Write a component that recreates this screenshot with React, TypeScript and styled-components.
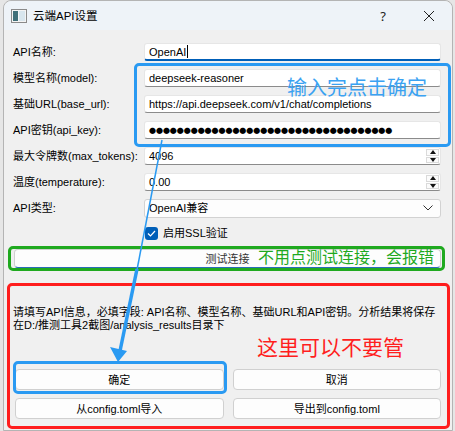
import React from 'react';
import styled, { createGlobalStyle } from 'styled-components';

const GlobalStyle = createGlobalStyle`
    body {
        margin: 0;
        background: #e6e6e6;
        font-family: "Liberation Sans", "Noto Sans CJK SC", sans-serif;
    }
`;

const ANNOT_BLUE = '#2a9af2';
const ANNOT_GREEN = '#1fa91f';
const ANNOT_RED = '#ff1e1e';

const fields = [
    { label: 'API名称:', value: 'OpenAI', focused: true },
    { label: '模型名称(model):', value: 'deepseek-reasoner' },
    { label: '基础URL(base_url):', value: 'https://api.deepseek.com/v1/chat/completions' },
];

export default function App() {
    return (
        <>
            <GlobalStyle />
            <Window>
                <TitleBar>
                    <AppIcon width="16" height="14" viewBox="0 0 16 14">
                        <rect x="0.5" y="0.5" width="15" height="13" fill="#f4f4f4" stroke="#8a8a8a" />
                        <rect x="2" y="2" width="5" height="10" fill="#3f6f78" />
                        <rect x="8" y="2" width="6" height="10" fill="#d8e6ee" />
                    </AppIcon>
                    <Title>云端API设置</Title>
                    <TitleButton>?</TitleButton>
                    <TitleButton>
                        <svg width="12" height="12" viewBox="0 0 12 12">
                            <path d="M1 1 L11 11 M11 1 L1 11" stroke="#222" strokeWidth="1" />
                        </svg>
                    </TitleButton>
                </TitleBar>
                <Body>
                    <Form>
                        {fields.map((f) => (
                            <React.Fragment key={f.label}>
                                <Label>{f.label}</Label>
                                <Input $focused={f.focused}>
                                    {f.value}
                                    {f.focused && <Caret />}
                                </Input>
                            </React.Fragment>
                        ))}
                        <Label>API密钥(api_key):</Label>
                        <Input>
                            <Dots>{'●'.repeat(35)}</Dots>
                        </Input>
                        <Label>最大令牌数(max_tokens):</Label>
                        <Input>
                            4096
                            <Spinner>
                                <SpinUp />
                                <SpinDown />
                            </Spinner>
                        </Input>
                        <Label>温度(temperature):</Label>
                        <Input>
                            0.00
                            <Spinner>
                                <SpinUp />
                                <SpinDown />
                            </Spinner>
                        </Input>
                        <Label>API类型:</Label>
                        <Combo>
                            OpenAI兼容
                            <Chevron width="10" height="6" viewBox="0 0 10 6">
                                <path d="M0.5 0.5 L5 5 L9.5 0.5" fill="none" stroke="#333" strokeWidth="1" />
                            </Chevron>
                        </Combo>
                        <span />
                        <CheckRow>
                            <CheckBox>
                                <svg width="9" height="7" viewBox="0 0 9 7">
                                    <path d="M1 3.5 L3.5 6 L8 1" fill="none" stroke="#fff" strokeWidth="1.2" />
                                </svg>
                            </CheckBox>
                            启用SSL验证
                        </CheckRow>
                    </Form>
                    <TestButton>测试连接</TestButton>
                    <Info>
                        请填写API信息，必填字段: API名称、模型名称、基础URL和API密钥。分析结果将保存
                        <br />
                        在D:/推测工具2截图/analysis_results目录下
                    </Info>
                    <ButtonGrid>
                        <Button>确定</Button>
                        <Button>取消</Button>
                        <Button>从config.toml导入</Button>
                        <Button>导出到config.toml</Button>
                    </ButtonGrid>
                </Body>

                <Frame $color={ANNOT_BLUE} style={{ left: 130, top: 62, width: 317, height: 84 }} />
                <Frame $color={ANNOT_GREEN} style={{ left: 4, top: 245, width: 437, height: 25 }} />
                <Frame $color={ANNOT_RED} style={{ left: 3, top: 282, width: 443, height: 146 }} />
                <Frame $color={ANNOT_BLUE} style={{ left: 9, top: 360, width: 214, height: 33 }} />
                <Note $color="#3aa2f2" $size={20} style={{ left: 283, top: 75 }}>
                    输入完点击确定
                </Note>
                <Note $color={ANNOT_GREEN} $size={16} style={{ left: 254, top: 247 }}>
                    不用点测试连接，会报错
                </Note>
                <Note $color={ANNOT_RED} $size={21} style={{ left: 253, top: 334 }}>
                    这里可以不要管
                </Note>
                <Arrow width="450" height="431" viewBox="0 0 450 431">
                    <line x1="158" y1="139" x2="132" y2="274" stroke={ANNOT_BLUE} strokeWidth="1.5" />
                    <line x1="133" y1="268" x2="116" y2="350" stroke={ANNOT_BLUE} strokeWidth="3.5" />
                    <polygon points="114,361 106,346 123,350" fill={ANNOT_BLUE} />
                </Arrow>
            </Window>
        </>
    );
}

const Window = styled.div`
    position: relative;
    box-sizing: border-box;
    margin-left: 3px;
    width: 450px;
    height: 431px;
    background: #f0f0f0;
    border: 1px solid #b4b4b4;
    border-radius: 8px 8px 0 0;
    color: #000;
    font-size: 11px;
`;

const TitleBar = styled.div`
    display: flex;
    align-items: center;
    height: 29px;
    padding-left: 7px;
    background: #eef3f8;
    border-radius: 8px 8px 0 0;
`;

const AppIcon = styled.svg`
    flex: none;
    margin-top: 1px;
`;

const Title = styled.div`
    flex: 1;
    margin-left: 6px;
    font-size: 11.5px;
    line-height: 16px;
`;

const TitleButton = styled.div`
    width: 46px;
    height: 29px;
    display: flex;
    align-items: center;
    justify-content: center;
    font-family: "Noto Sans", sans-serif;
    font-size: 13px;
    color: #222;
`;

const Body = styled.div`
    padding: 13px 11px 0 9px;
`;

const Form = styled.div`
    display: grid;
    grid-template-columns: 131px 1fr;
    grid-auto-rows: 18px;
    row-gap: 8px;
    align-items: center;
`;

const Label = styled.div`
    line-height: 18px;
    white-space: nowrap;
`;

const Input = styled.div<{ $focused?: boolean }>`
    position: relative;
    box-sizing: border-box;
    height: 18px;
    display: flex;
    align-items: center;
    padding-left: 4px;
    line-height: 16px;
    background: #fff;
    border: 1px solid #e6e6e6;
    border-bottom: ${(p) => (p.$focused ? '2px solid #005fb8' : '1px solid #8b8b8b')};
    border-radius: 3px;
    white-space: nowrap;
    overflow: hidden;
`;

const Caret = styled.span`
    display: inline-block;
    width: 1px;
    height: 13px;
    margin-left: 1px;
    background: #000;
`;

const Dots = styled.span`
    font-family: "Noto Sans CJK SC", sans-serif;
    font-size: 7px;
    letter-spacing: -0.05px;
    color: #000;
`;

const Spinner = styled.div`
    position: absolute;
    right: 1px;
    top: 1px;
    bottom: 1px;
    width: 13px;
    display: flex;
    flex-direction: column;
    gap: 1px;
`;

const SpinPart = styled.div`
    flex: 1;
    display: flex;
    align-items: center;
    justify-content: center;
    border: 1px solid #dadada;
    background: #fbfbfb;
    &::after {
        content: '';
        border-left: 3px solid transparent;
        border-right: 3px solid transparent;
    }
`;

const SpinUp = styled(SpinPart)`
    &::after {
        border-bottom: 4px solid #111;
    }
`;

const SpinDown = styled(SpinPart)`
    &::after {
        border-top: 4px solid #111;
    }
`;

const Combo = styled.div`
    box-sizing: border-box;
    height: 19px;
    display: flex;
    align-items: center;
    justify-content: space-between;
    padding: 0 7px 0 4px;
    line-height: 16px;
    background: #fdfdfd;
    border: 1px solid #d2d2d2;
    border-radius: 3px;
`;

const Chevron = styled.svg`
    flex: none;
`;

const CheckRow = styled.div`
    display: flex;
    align-items: center;
    align-self: start;
    gap: 5px;
    padding-left: 1px;
    margin-top: 1px;
    line-height: 14px;
`;

const CheckBox = styled.div`
    width: 13px;
    height: 13px;
    border-radius: 3px;
    background: #005fb8;
    display: flex;
    align-items: center;
    justify-content: center;
`;

const Button = styled.div`
    box-sizing: border-box;
    height: 21px;
    display: flex;
    align-items: center;
    justify-content: center;
    line-height: 16px;
    background: #fdfdfd;
    border: 1px solid #d0d0d0;
    border-radius: 4px;
    font-size: 11px;
`;

const TestButton = styled(Button)`
    height: 19px;
    margin: 6px 0 0 1px;
    border-bottom-color: #2a6cb8;
    color: #333;
`;

const Info = styled.div`
    margin-top: 38px;
    line-height: 13px;
    font-size: 11px;
    white-space: nowrap;
`;

const ButtonGrid = styled.div`
    display: grid;
    grid-template-columns: 1fr 1fr;
    column-gap: 9px;
    row-gap: 8px;
    margin: 37px 0 0 2px;
`;

const Frame = styled.div<{ $color: string }>`
    position: absolute;
    box-sizing: border-box;
    border: 3px solid ${(p) => p.$color};
    border-radius: 5px;
    pointer-events: none;
`;

const Note = styled.div<{ $color: string; $size: number }>`
    position: absolute;
    color: ${(p) => p.$color};
    font-size: ${(p) => p.$size}px;
    line-height: ${(p) => p.$size + 4}px;
    white-space: nowrap;
`;

const Arrow = styled.svg`
    position: absolute;
    left: 0;
    top: 0;
    pointer-events: none;
`;
